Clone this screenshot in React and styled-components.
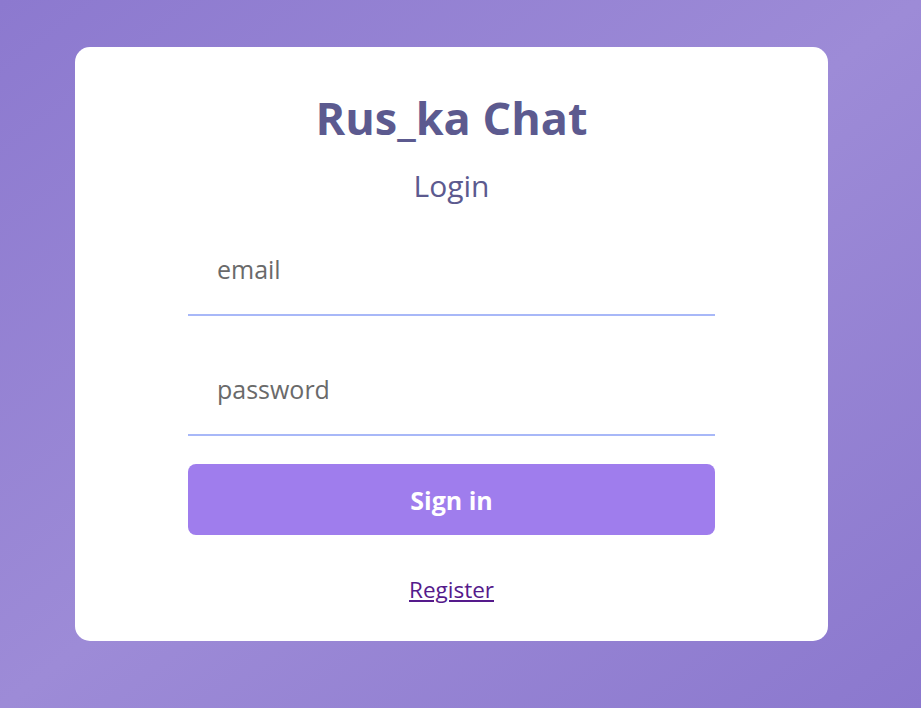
import React from 'react';
import styled, { createGlobalStyle } from 'styled-components';

const GlobalStyle = createGlobalStyle`
  html, body {
    margin: 0;
    padding: 0;
    height: 100%;
  }
  body {
    font-family: "Open Sans", "Noto Sans", sans-serif;
    background: linear-gradient(to bottom right, #8c79cf 0%, #9d8bd7 50%, #8b78ce 100%);
    min-height: 708px;
  }
`;

const Page = styled.div`
  display: flex;
  justify-content: flex-start;
  padding: 47px 0 0 75px;
  box-sizing: border-box;
  height: 708px;
`;

const Card = styled.div`
  width: 753px;
  height: 594px;
  background: #fff;
  border-radius: 15px;
  display: flex;
  flex-direction: column;
  align-items: center;
  box-sizing: border-box;
  padding-top: 41px;
`;

const Title = styled.h1`
  margin: 0;
  font-size: 45px;
  font-weight: 700;
  line-height: 59px;
  color: #5c5a8f;
`;

const SubTitle = styled.h2`
  margin: 19px 0 0;
  font-size: 30px;
  font-weight: 400;
  line-height: 40px;
  color: #5c5a8f;
`;

const Form = styled.form`
  width: 70%;
  display: flex;
  flex-direction: column;
  margin-top: 18px;
`;

const Input = styled.input`
  font-family: inherit;
  font-size: 25px;
  line-height: 30px;
  color: #444;
  border: none;
  border-bottom: 2px solid #a8b8f8;
  padding: 30px 29px;
  margin-bottom: 28px;
  outline: none;
  background: transparent;

  &::placeholder {
    color: #6a6a6a;
  }
`;

const Button = styled.button`
  height: 71px;
  border: none;
  border-radius: 8px;
  background: #9f7ded;
  color: #fff;
  font-family: inherit;
  font-size: 25px;
  font-weight: 700;
  cursor: pointer;
`;

const Footer = styled.p`
  margin: 39px 0 0;
  text-align: center;
  font-size: 22.5px;
`;

const Link = styled.a`
  color: #551a8b;
  text-decoration: underline;
`;

export default function App() {
  return (
    <>
      <GlobalStyle />
      <Page>
        <Card>
          <Title>Rus_ka Chat</Title>
          <SubTitle>Login</SubTitle>
          <Form onSubmit={e => e.preventDefault()}>
            <Input type="email" placeholder="email" />
            <Input type="password" placeholder="password" />
            <Button type="submit">Sign in</Button>
            <Footer>
              <Link href="#register">Register</Link>
            </Footer>
          </Form>
        </Card>
      </Page>
    </>
  );
}
